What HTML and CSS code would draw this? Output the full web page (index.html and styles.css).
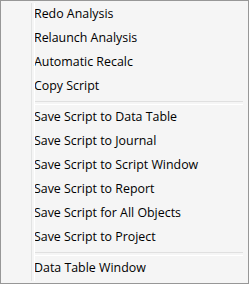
FILE: index.html
```html
<!DOCTYPE html>
<html>
	<head>
		<meta charset="UTF-8">
		<title>Menu</title>
		<link rel="stylesheet" href="styles.css">
	</head>
	<body>
		<div class="menu">
			<ul>
				<li>Redo Analysis</li>
				<li>Relaunch Analysis</li>
				<li>Automatic Recalc</li>
				<li>Copy Script</li>
				<li class="sep"></li>
				<li>Save Script to Data Table</li>
				<li>Save Script to Journal</li>
				<li>Save Script to Script Window</li>
				<li>Save Script to Report</li>
				<li>Save Script for All Objects</li>
				<li>Save Script to Project</li>
				<li class="sep"></li>
				<li>Data Table Window</li>
			</ul>
		</div>
	</body>
</html>
```

FILE: styles.css
```css
* {
	margin: 0;
	padding: 0;
	box-sizing: border-box;
}
body {
	background: #fff;
}
li {
	list-style: none;
}
.menu {
	width: 249px;
	height: 284px;
	border: 1px solid #979797;
	background: #f5f5f5;
	padding: 1px 2px 3px 2px;
	font-family: "Open Sans", "Noto Sans", sans-serif;
	font-size: 12.4px;
	color: #000;
	position: relative;
}
.menu::before {
	content: "";
	position: absolute;
	left: 30px;
	top: 2px;
	bottom: 2px;
	width: 2px;
	border-left: 1px solid #e2e3e3;
	border-right: 1px solid #fff;
}
.menu li {
	height: 24px;
	line-height: 24px;
	padding-left: 31px;
	white-space: nowrap;
}
.menu li.sep {
	height: 7px;
	margin: 0 3px 0 31px;
	padding: 0;
	border-top: 3px solid transparent;
}
.menu li.sep::after {
	content: "";
	display: block;
	height: 2px;
	border-top: 1px solid #e0e0e0;
	border-bottom: 1px solid #fff;
}
```
